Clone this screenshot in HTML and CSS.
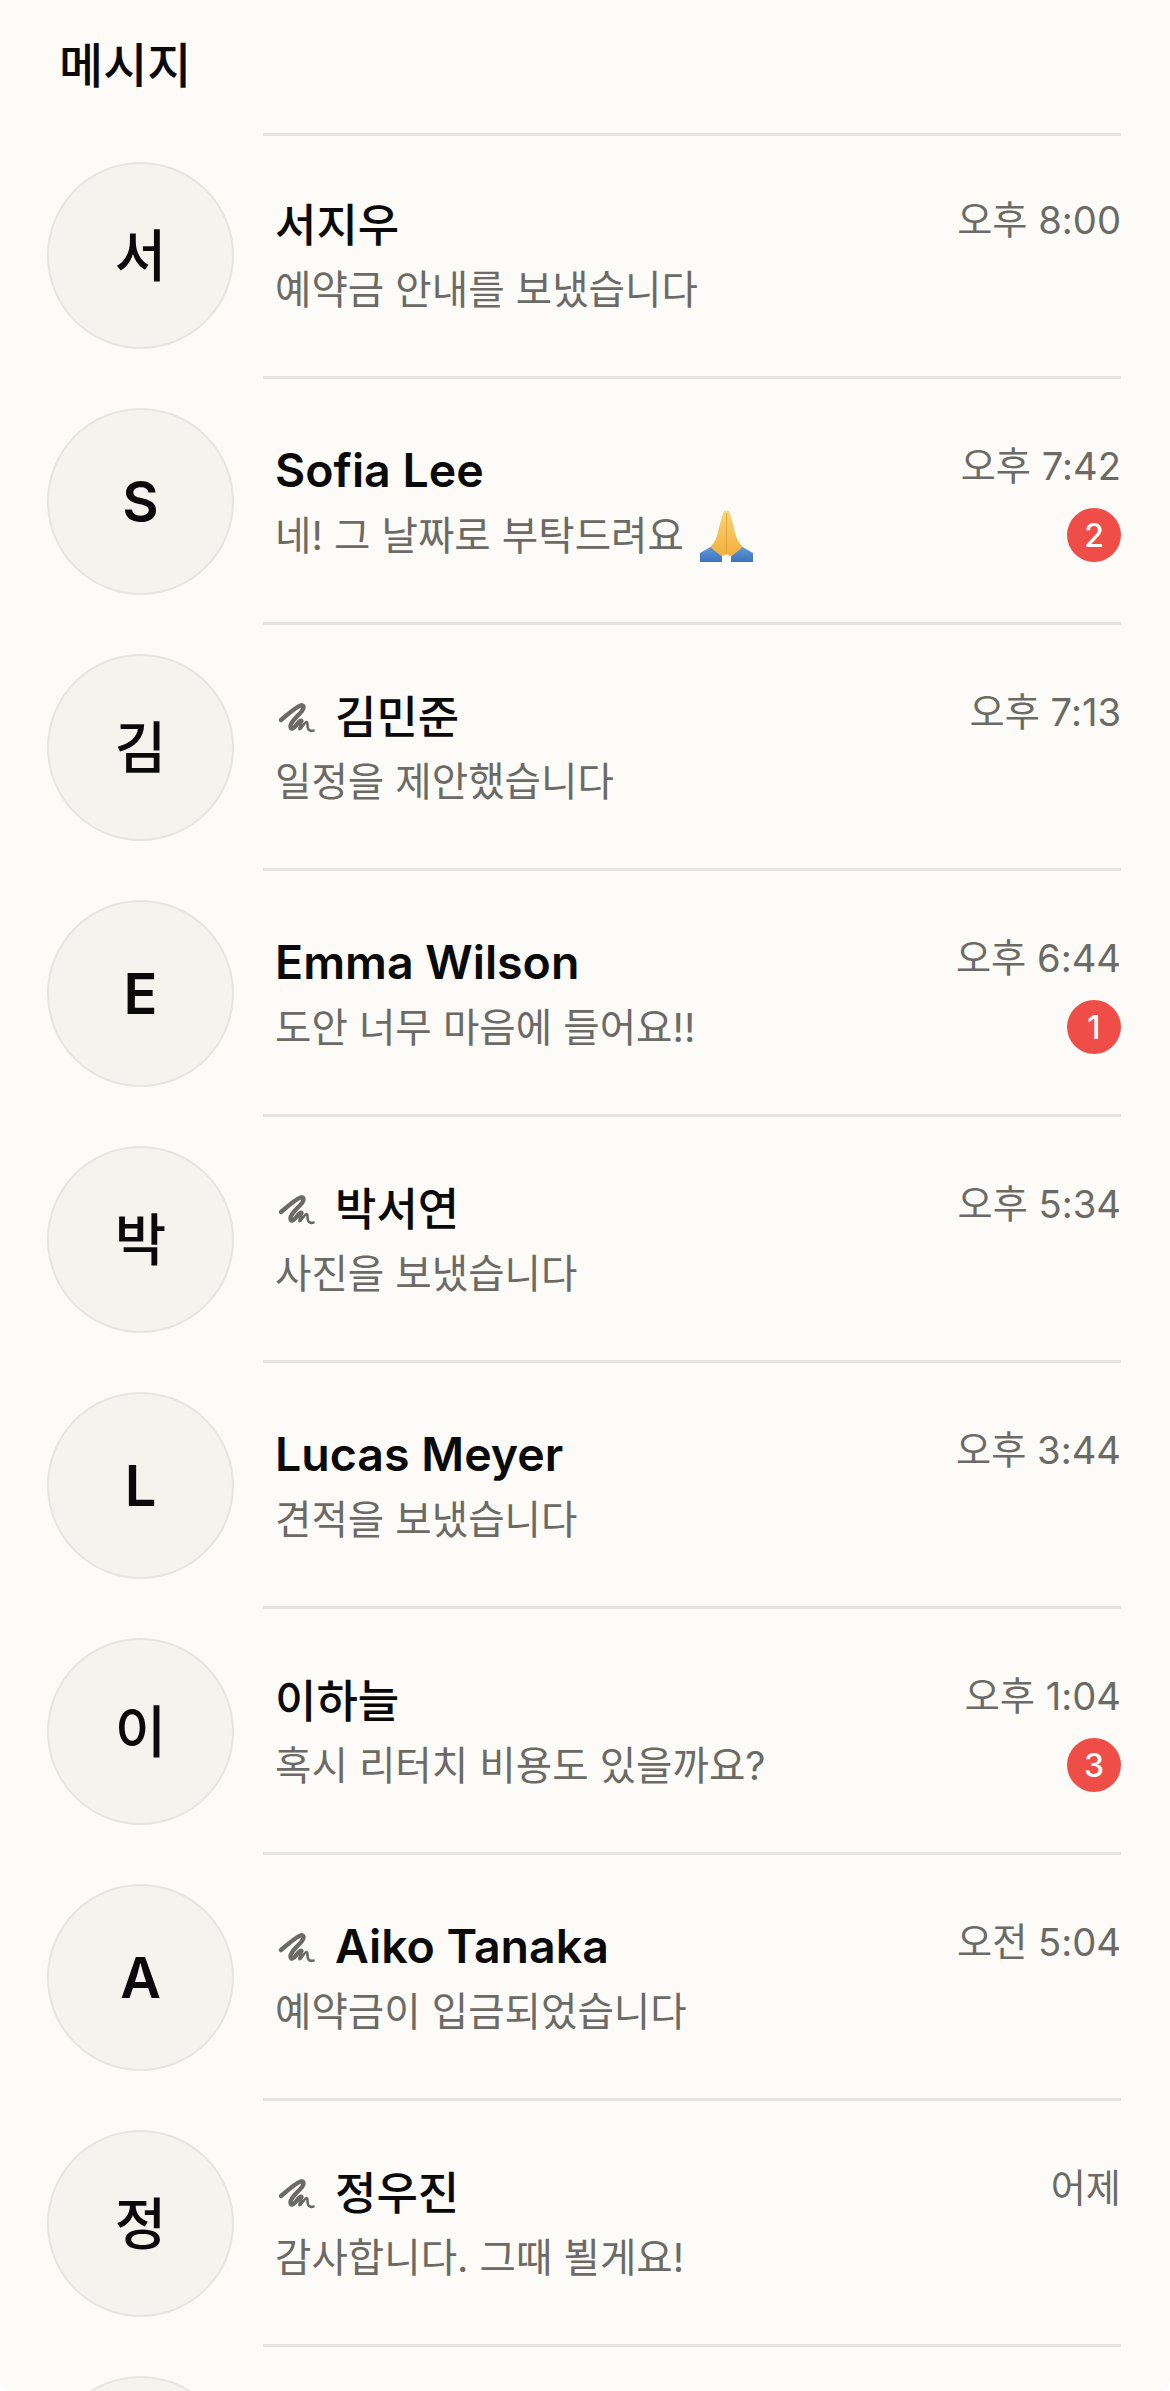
FILE: index.html
```html
<!DOCTYPE html>
<html lang="ko">

<head>
    <meta charset="UTF-8">
    <meta name="viewport" content="width=device-width, initial-scale=1.0">
    <title>메시지</title>
    <link rel="stylesheet" href="styles.css">
</head>

<body>
    <svg class="defs" width="0" height="0">
        <symbol id="scribble" viewBox="0 -2 40 38">
            <path d="M6 23C13 17 21 10 25.500 8.500C29 7.500 29.500 10.500 27 14C23 19 16 24 15.500 29C15.500 33 18.500 32 21 28.500C23 26 25.500 23 26.500 24" fill="none" stroke="currentColor" stroke-width="4.400" stroke-linecap="round" stroke-linejoin="round" />
            <path d="M26.500 24C27.500 25.500 23.500 30 24.500 32C25.500 33.500 29 25.500 31.500 25C33.500 25 31.500 30 33.500 32.500C35 34 37 34 38.500 33.500" fill="none" stroke="currentColor" stroke-width="2.600" stroke-linecap="round" stroke-linejoin="round" />
        </symbol>
    </svg>

    <main class="screen">
        <header class="top">
            <h1>메시지</h1>
        </header>

        <ul class="threads">
            <li class="thread">
                <div class="avatar">서</div>
                <div class="body">
                    <div class="main">
                        <div class="name">서지우</div>
                        <div class="preview">예약금 안내를 보냈습니다</div>
                    </div>
                    <div class="side"><span class="time">오후 8:00</span></div>
                </div>
            </li>
            <li class="thread">
                <div class="avatar latin">S</div>
                <div class="body">
                    <div class="main">
                        <div class="name latin">Sofia Lee</div>
                        <div class="preview">네! 그 날짜로 부탁드려요
                            <svg class="pray" viewBox="0 0 53 52" aria-label="🙏">
                                <defs>
                                    <linearGradient id="skin" x1="0" y1="0" x2="0" y2="1">
                                        <stop offset="0" stop-color="#fcd576" />
                                        <stop offset="1" stop-color="#f0b03c" />
                                    </linearGradient>
                                    <linearGradient id="sleeve" x1="0" y1="0" x2="0" y2="1">
                                        <stop offset="0" stop-color="#6a9cdc" />
                                        <stop offset="1" stop-color="#3a74bb" />
                                    </linearGradient>
                                </defs>
                                <path d="M0 43L13 35.500L22 46V52H0Z" fill="url(#sleeve)" />
                                <path d="M53 43L40 35.500L31 46V52H53Z" fill="url(#sleeve)" />
                                <path d="M24.500 0.500C25.500 0 26.500 1 26.500 2V44C25 45 22 47 20 45C17 42 11 39 11 36C14 33 17 28 18 22C20 14 22 5 24.500 0.500Z" fill="url(#skin)" />
                                <path d="M28.500 0.500C27.500 0 26.500 1 26.500 2V44C28 45 31 47 33 45C36 42 42 39 42 36C39 33 36 28 35 22C33 14 31 5 28.500 0.500Z" fill="url(#skin)" />
                                <path d="M26.500 3V44" fill="none" stroke="#d9982c" stroke-width="0.800" />
                            </svg>
                        </div>
                    </div>
                    <div class="side"><span class="time">오후 7:42</span><span class="badge">2</span></div>
                </div>
            </li>
            <li class="thread">
                <div class="avatar">김</div>
                <div class="body">
                    <div class="main">
                        <div class="name"><svg class="mark"><use href="#scribble" /></svg>김민준</div>
                        <div class="preview">일정을 제안했습니다</div>
                    </div>
                    <div class="side"><span class="time">오후 7:13</span></div>
                </div>
            </li>
            <li class="thread">
                <div class="avatar latin">E</div>
                <div class="body">
                    <div class="main">
                        <div class="name latin">Emma Wilson</div>
                        <div class="preview">도안 너무 마음에 들어요!!</div>
                    </div>
                    <div class="side"><span class="time">오후 6:44</span><span class="badge">1</span></div>
                </div>
            </li>
            <li class="thread">
                <div class="avatar">박</div>
                <div class="body">
                    <div class="main">
                        <div class="name"><svg class="mark"><use href="#scribble" /></svg>박서연</div>
                        <div class="preview">사진을 보냈습니다</div>
                    </div>
                    <div class="side"><span class="time">오후 5:34</span></div>
                </div>
            </li>
            <li class="thread">
                <div class="avatar latin">L</div>
                <div class="body">
                    <div class="main">
                        <div class="name latin">Lucas Meyer</div>
                        <div class="preview">견적을 보냈습니다</div>
                    </div>
                    <div class="side"><span class="time">오후 3:44</span></div>
                </div>
            </li>
            <li class="thread">
                <div class="avatar">이</div>
                <div class="body">
                    <div class="main">
                        <div class="name">이하늘</div>
                        <div class="preview">혹시 리터치 비용도 있을까요?</div>
                    </div>
                    <div class="side"><span class="time">오후 1:04</span><span class="badge">3</span></div>
                </div>
            </li>
            <li class="thread">
                <div class="avatar latin">A</div>
                <div class="body">
                    <div class="main">
                        <div class="name latin"><svg class="mark"><use href="#scribble" /></svg>Aiko Tanaka</div>
                        <div class="preview">예약금이 입금되었습니다</div>
                    </div>
                    <div class="side"><span class="time">오전 5:04</span></div>
                </div>
            </li>
            <li class="thread">
                <div class="avatar">정</div>
                <div class="body">
                    <div class="main">
                        <div class="name"><svg class="mark"><use href="#scribble" /></svg>정우진</div>
                        <div class="preview">감사합니다. 그때 뵐게요!</div>
                    </div>
                    <div class="side"><span class="time">어제</span></div>
                </div>
            </li>
            <li class="thread">
                <div class="avatar"></div>
                <div class="body"></div>
            </li>
        </ul>
    </main>
</body>

</html>
```

FILE: styles.css
```css
* {
    box-sizing: border-box;
}

html,
body {
    margin: 0;
    padding: 0;
    height: 100%;
    overflow: hidden;
    background-color: #fff;
}

body {
    font-family: Inter, "Noto Sans CJK KR", sans-serif;
    color: #0a0a0a;
}

.defs {
    display: block;
    height: 0;
}

.screen {
    height: 2391px;
    overflow: hidden;
    border-radius: 0 0 12px 12px;
    background-color: #fcfbf8;
}

/* 상단 제목 */
.top {
    height: 133px;
    padding: 36px 0 0 59px;
}

.top h1 {
    margin: 0;
    font-size: 48px;
    font-weight: 500;
    line-height: 60px;
}

/* 대화 목록 */
.threads {
    list-style: none;
    margin: 0;
    padding: 0;
}

.thread {
    --inset: 32px;
    display: flex;
    gap: 29px;
    height: 246px;
    padding-left: 47px;
}

.thread:first-child {
    --inset: 29px;
    height: 243px;
}

.avatar {
    flex: none;
    display: flex;
    align-items: center;
    justify-content: center;
    width: 187px;
    height: 187px;
    margin-top: var(--inset);
    padding-bottom: 8px;
    border: 2px solid #e7e5e0;
    border-radius: 50%;
    background-color: #f5f3ee;
    font-size: 56px;
    font-weight: 500;
}

.avatar.latin {
    padding-bottom: 0;
    font-weight: 600;
}

.body {
    flex: 1;
    display: flex;
    justify-content: space-between;
    margin-right: 49px;
    padding: calc(var(--inset) + 29px) 0 0 12px;
    border-top: 3px solid #e5e4e0;
}

.name {
    display: flex;
    align-items: center;
    height: 56px;
    font-size: 45px;
    font-weight: 500;
}

.name.latin {
    padding-top: 3px;
    font-size: 46.500px;
    font-weight: 600;
}

.mark {
    flex: none;
    width: 40px;
    height: 38px;
    margin-right: 20px;
    color: #6b6a65;
}

.name.latin .mark {
    margin-top: -3px;
}

.preview {
    height: 52px;
    margin-top: 14px;
    font-size: 39.600px;
    line-height: 52px;
    color: #6b6a65;
    white-space: nowrap;
}

.pray {
    width: 53px;
    height: 52px;
    margin: -10px 0 -10px 5px;
    vertical-align: -2px;
}

.side {
    display: flex;
    flex-direction: column;
    align-items: flex-end;
}

.time {
    margin-top: 1px;
    font-size: 38.200px;
    line-height: 50px;
    color: #6b6a65;
}

.badge {
    display: flex;
    align-items: center;
    justify-content: center;
    width: 54px;
    height: 54px;
    margin-top: 17px;
    border-radius: 50%;
    background-color: #ef4d48;
    color: #fff;
    font-size: 32px;
    font-weight: 500;
}
```
